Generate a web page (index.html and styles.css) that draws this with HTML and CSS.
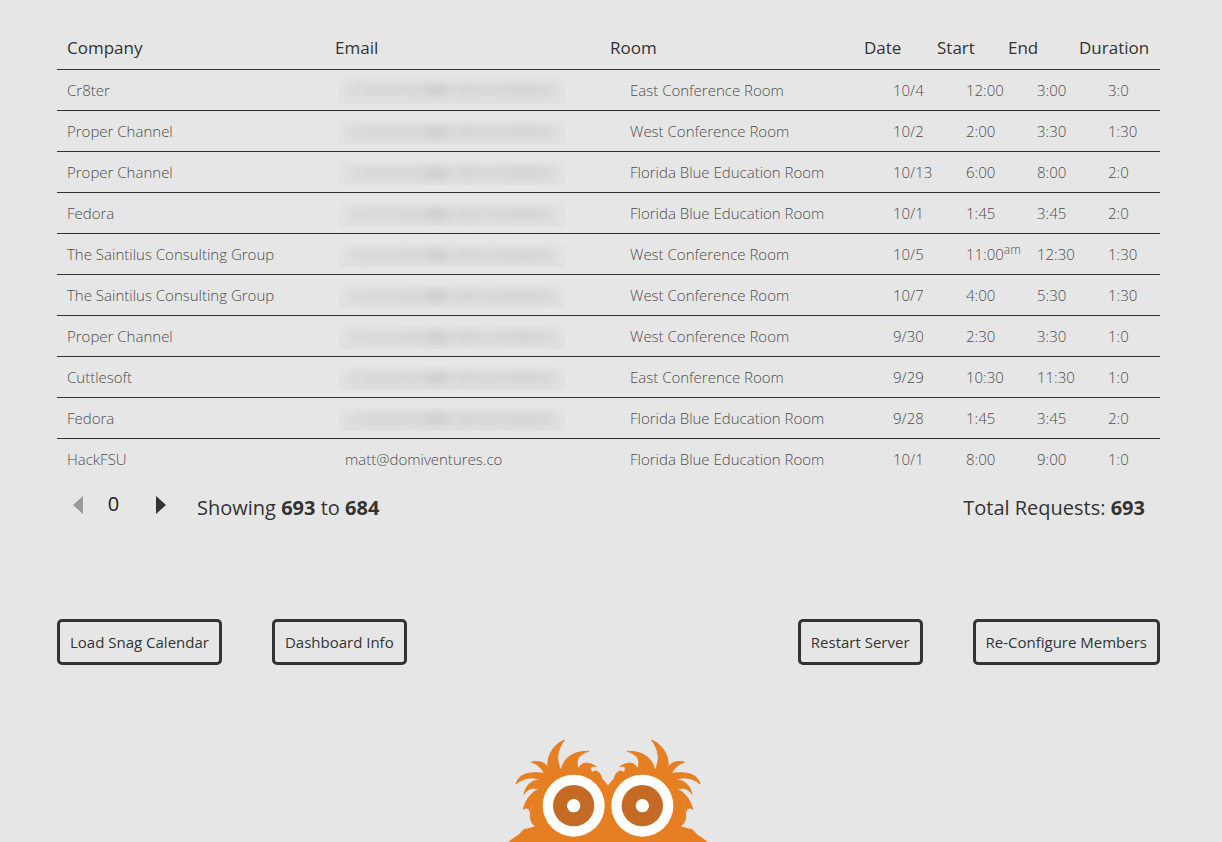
FILE: index.html
```html
<!DOCTYPE html>
<html lang="en">
<head>
    <meta charset="UTF-8">
    <meta name="viewport" content="width=device-width, initial-scale=1.0">
    <title>Snag Dashboard</title>
    <link rel="stylesheet" href="styles.css">
</head>
<body>
    <div class="page">
        <div class="head-row">
            <div>Company</div><div>Email</div><div>Room</div><div>Date</div><div>Start</div><div>End</div><div>Duration</div>
        </div>

        <div class="row">
            <div>Cr8ter</div><div><div class="blur-box tall"><div class="blur-bar"></div></div></div><div>East Conference Room</div><div>10/4</div><div>12:00</div><div>3:00</div><div>3:0</div>
        </div>
        <div class="row">
            <div>Proper Channel</div><div><div class="blur-box"><div class="blur-bar"></div></div></div><div>West Conference Room</div><div>10/2</div><div>2:00</div><div>3:30</div><div>1:30</div>
        </div>
        <div class="row">
            <div>Proper Channel</div><div><div class="blur-box"><div class="blur-bar"></div></div></div><div>Florida Blue Education Room</div><div>10/13</div><div>6:00</div><div>8:00</div><div>2:0</div>
        </div>
        <div class="row">
            <div>Fedora</div><div><div class="blur-box"><div class="blur-bar"></div></div></div><div>Florida Blue Education Room</div><div>10/1</div><div>1:45</div><div>3:45</div><div>2:0</div>
        </div>
        <div class="row">
            <div>The Saintilus Consulting Group</div><div><div class="blur-box"><div class="blur-bar"></div></div></div><div>West Conference Room</div><div>10/5</div><div class="nowrap">11:00<sup>am</sup></div><div>12:30</div><div>1:30</div>
        </div>
        <div class="row">
            <div>The Saintilus Consulting Group</div><div><div class="blur-box"><div class="blur-bar"></div></div></div><div>West Conference Room</div><div>10/7</div><div>4:00</div><div>5:30</div><div>1:30</div>
        </div>
        <div class="row">
            <div>Proper Channel</div><div><div class="blur-box"><div class="blur-bar"></div></div></div><div>West Conference Room</div><div>9/30</div><div>2:30</div><div>3:30</div><div>1:0</div>
        </div>
        <div class="row">
            <div>Cuttlesoft</div><div><div class="blur-box"><div class="blur-bar"></div></div></div><div>East Conference Room</div><div>9/29</div><div>10:30</div><div>11:30</div><div>1:0</div>
        </div>
        <div class="row">
            <div>Fedora</div><div><div class="blur-box"><div class="blur-bar"></div></div></div><div>Florida Blue Education Room</div><div>9/28</div><div>1:45</div><div>3:45</div><div>2:0</div>
        </div>
        <div class="row last">
            <div>HackFSU</div><div>matt@domiventures.co</div><div>Florida Blue Education Room</div><div>10/1</div><div>8:00</div><div>9:00</div><div>1:0</div>
        </div>

        <div class="pager">
            <div class="arrow arrow-left"></div>
            <div class="page-num">0</div>
            <div class="arrow arrow-right"></div>
            <div class="showing">Showing <b>693</b> to <b>684</b></div>
            <div class="total">Total Requests: <b>693</b></div>
        </div>

        <div class="actions">
            <button class="btn">Load Snag Calendar</button>
            <button class="btn">Dashboard Info</button>
            <div class="spacer"></div>
            <button class="btn">Restart Server</button>
            <button class="btn">Re-Configure Members</button>
        </div>

        <div class="logo">
            <svg width="240" height="112" viewBox="0 0 720 336">
                <defs>
                    <path id="fur" d="M56 336 L90 312 L100 300 L138 290 C120 278 114 255 130 224 C122 230 119 238 120 246 C118 236 110 230 100 238 C106 212 122 188 146 178 C128 170 112 176 102 193 C106 168 124 150 150 150 C130 138 100 143 78 162 C85 138 105 123 164 130 C152 112 140 100 124 97 C145 90 165 98 174 112 C170 80 188 45 223 30 C201 60 196 90 214 122 C218 92 240 63 296 64 C270 72 252 90 266 116 C272 98 292 93 319 110 C300 105 298 116 307 127 C317 118 332 126 335 145 L354 168 L354 336 Z"/>
                </defs>
                <use href="#fur" fill="#e67e22" stroke="#e67e22" stroke-width="3"/>
                <use href="#fur" fill="#e67e22" stroke="#e67e22" stroke-width="3" transform="translate(708 0) scale(-1 1)"/>
                <circle cx="251" cy="227" r="93" fill="#fff"/>
                <circle cx="251" cy="227" r="62" fill="#c56a25"/>
                <circle cx="251" cy="227" r="20" fill="#fff"/>
                <circle cx="457" cy="227" r="93" fill="#fff"/>
                <circle cx="457" cy="227" r="62" fill="#c56a25"/>
                <circle cx="457" cy="227" r="20" fill="#fff"/>
            </svg>
        </div>
    </div>
</body>
</html>
```

FILE: styles.css
```css
html, body {
    height: 842px;
    overflow: hidden;
}
body {
    font-family: "Open Sans", Arial, sans-serif;
    margin: 0;
    padding: 0;
    background-color: #E6E6E6;
    color: #333;
}
.page {
    width: 1103px;
    margin-left: 57px;
    padding-top: 29px;
}
.head-row {
    display: grid;
    grid-template-columns: 268px 275px 254px 73px 71px 71px 1fr;
    height: 41px;
    box-sizing: border-box;
    padding: 0 0 4px 10px;
    align-items: center;
    border-bottom: 1px solid #333;
    font-size: 17px;
}
.row {
    display: grid;
    grid-template-columns: 278px 285px 263px 73px 71px 71px 1fr;
    height: 41px;
    box-sizing: border-box;
    padding-left: 10px;
    align-items: center;
    border-bottom: 1px solid #333;
    font-size: 15px;
    font-weight: 300;
    color: #4d4d4d;
}
.row.last {
    border-bottom-color: transparent;
}
.blur-box {
    width: 226px;
    height: 24px;
    margin: 2px 0 0 -6px;
    background: linear-gradient(#E5E5E5, #E1E1E1);
    overflow: hidden;
}
.blur-box.tall {
    height: 28px;
    margin-top: 0;
}
.blur-bar {
    width: 208px;
    height: 12px;
    margin: 6px 0 0 9px;
    background: linear-gradient(90deg, #D8D8D8 0%, #D6D6D6 35%, #CBCBCB 42%, #CDCDCD 46%, #DBDBDB 50%, #D2D2D2 56%, #D8D8D8 65%, #D2D2D2 85%, #D8D8D8 100%);
    filter: blur(5px);
}
.blur-box.tall .blur-bar {
    margin-top: 8px;
}
.nowrap {
    white-space: nowrap;
}
sup {
    font-size: 12px;
    line-height: 0;
}
.pager {
    display: flex;
    align-items: center;
    height: 56px;
    margin-top: -1px;
    padding: 0 15px 0 16px;
}
.arrow {
    width: 0;
    height: 0;
    margin-bottom: 4px;
    border-top: 9px solid transparent;
    border-bottom: 9px solid transparent;
}
.arrow-left {
    border-right: 10px solid #999;
}
.arrow-right {
    border-left: 10px solid #333;
}
.page-num {
    width: 73px;
    text-align: center;
    font-size: 20px;
    padding: 0 12px 8px 0;
    box-sizing: border-box;
    color: #222;
}
.showing {
    margin-left: 31px;
    font-size: 20px;
}
.total {
    margin-left: auto;
    font-size: 20px;
}
.actions {
    display: flex;
    gap: 50px;
    margin-top: 84px;
}
.spacer {
    flex: 1;
}
.btn {
    height: 46px;
    padding: 0 10px;
    background: transparent;
    border: 3px solid #333;
    border-radius: 5px;
    font-family: "Open Sans", Arial, sans-serif;
    font-size: 15px;
    color: #333;
}
.logo {
    display: flex;
    justify-content: center;
    margin-top: 65px;
    padding-left: 3px;
}
.logo svg {
    display: block;
}
```
